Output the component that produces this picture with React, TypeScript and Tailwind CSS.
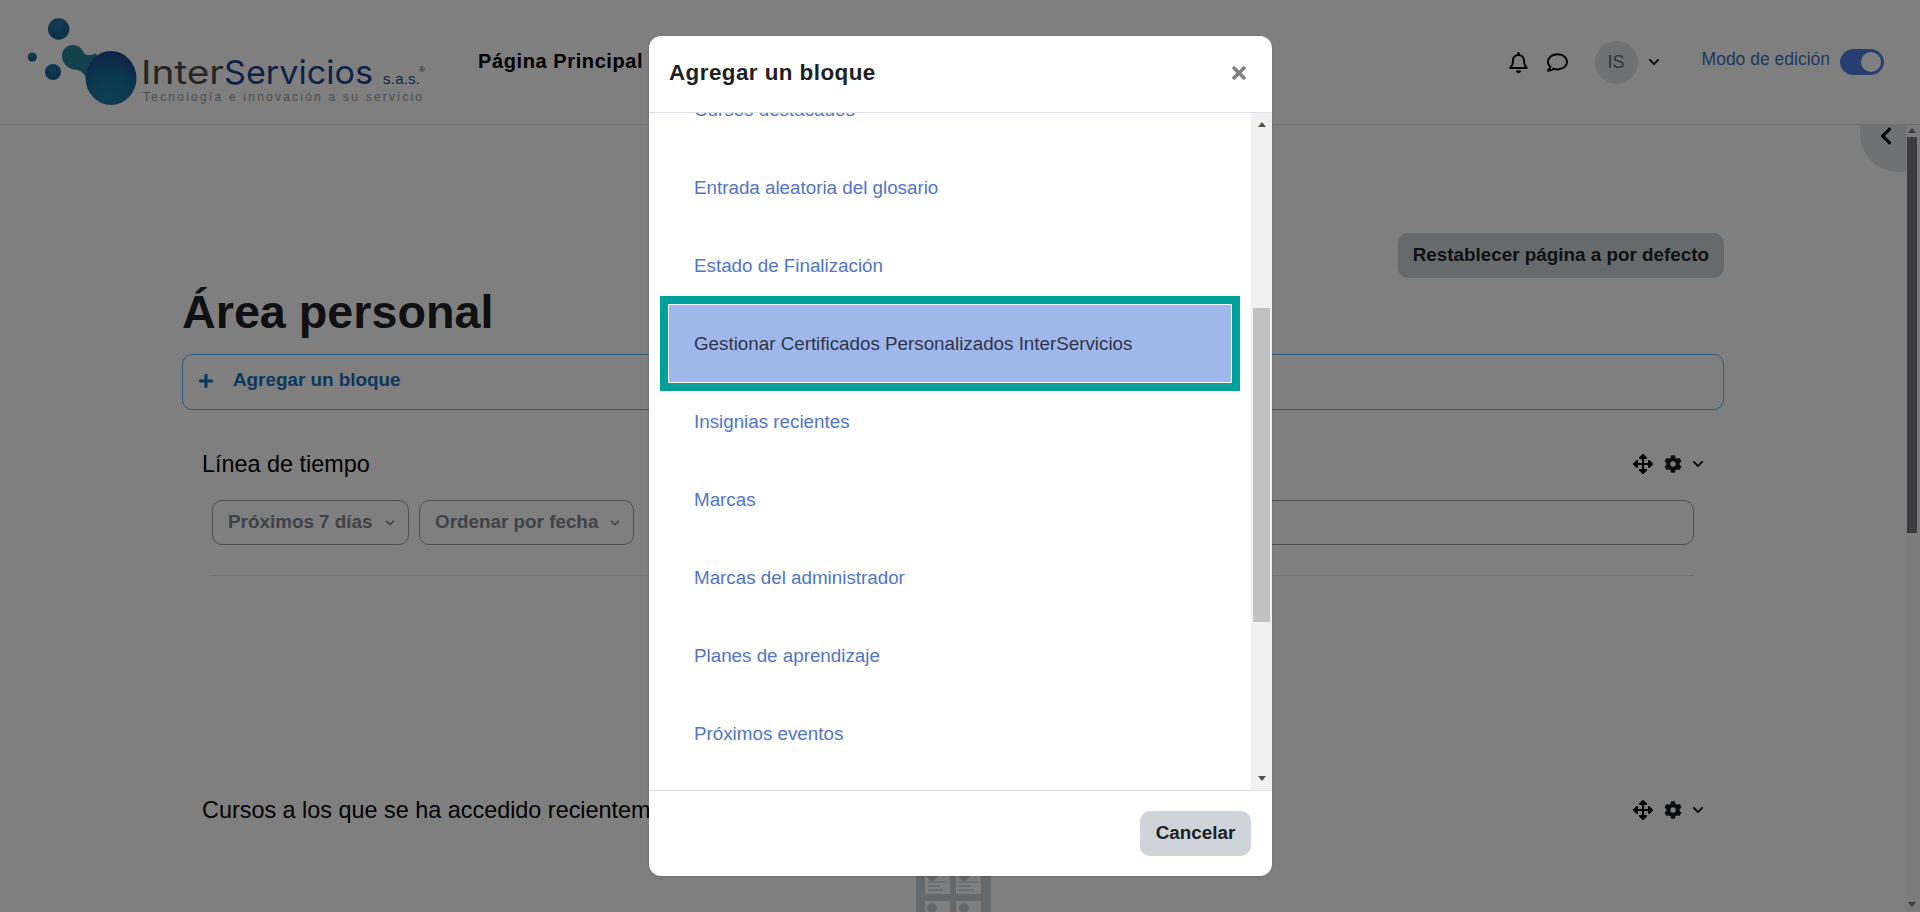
import { FaArrowsAlt, FaChevronDown, FaChevronLeft, FaCog, FaPlus, FaRegBell, FaRegComment, FaTimes } from "react-icons/fa";

const items = [
  "Cursos destacados",
  "Entrada aleatoria del glosario",
  "Estado de Finalización",
  "Gestionar Certificados Personalizados InterServicios",
  "Insignias recientes",
  "Marcas",
  "Marcas del administrador",
  "Planes de aprendizaje",
  "Próximos eventos",
];

function Logo() {
  return (
    <svg width="440" height="124" viewBox="0 0 440 124" className="shrink-0">
      <defs>
        <radialGradient id="big" cx="0.45" cy="0.85" r="0.9">
          <stop offset="0" stopColor="#1a80a8" />
          <stop offset="0.55" stopColor="#166a9c" />
          <stop offset="1" stopColor="#203f88" />
        </radialGradient>
        <radialGradient id="ball" cx="0.5" cy="0.3" r="0.8">
          <stop offset="0" stopColor="#2678a6" />
          <stop offset="1" stopColor="#12588c" />
        </radialGradient>
      </defs>
      <circle cx="58.7" cy="29" r="10.7" fill="url(#ball)" />
      <circle cx="32.3" cy="57" r="4.6" fill="url(#ball)" />
      <circle cx="53" cy="72" r="8" fill="url(#ball)" />
      <path d="M62 56c0-7 5-11 11-11 6 0 9 4 11 8 2 3 7 3 12 0l10 30-16 5c-2-9-6-16-12-18-9 0-16-6-16-14z" fill="#24809a" />
      <ellipse cx="111" cy="78" rx="25.5" ry="27" fill="url(#big)" />
      <text x="141" y="84" fontFamily="Inter, Liberation Sans, sans-serif" fontSize="33" fontWeight="400" textLength="83" lengthAdjust="spacingAndGlyphs" fill="#4a4a4a">Inter</text>
      <text x="224" y="84" fontFamily="Inter, Liberation Sans, sans-serif" fontSize="33" fontWeight="400" textLength="149" lengthAdjust="spacingAndGlyphs" fill="#1c4490">Servicios</text>
      <text x="383" y="84" fontFamily="Liberation Sans, sans-serif" fontSize="15" textLength="37" fill="#1c4490">s.a.s.</text>
      <text x="419" y="72" fontFamily="Liberation Sans, sans-serif" fontSize="8" fill="#1c4490">®</text>
      <text x="143" y="101" fontFamily="Liberation Sans, sans-serif" fontSize="12" textLength="279" fill="#999">Tecnología e innovación a su servicio</text>
    </svg>
  );
}

function BlockIcons() {
  return (
    <div className="flex items-center text-black">
      <FaArrowsAlt className="h-[20px] w-[20px]" />
      <FaCog className="ml-[11px] h-[18px] w-[18px] text-[#16181a]" />
      <FaChevronDown className="ml-[10px] h-[12px] w-[12px] text-[#16181a]" />
    </div>
  );
}

function Dropdown({ label, width }: { label: string; width: string }) {
  return (
    <button className={`flex h-[45px] shrink-0 items-center gap-[12px] rounded-[10px] border border-[#9c9c9c] pl-[15px] text-[18.85px] font-bold text-[#80848e] ${width}`}>
      {label}
      <FaChevronDown className="h-[10px] w-[10px]" />
    </button>
  );
}

function CoursesPicture() {
  return (
    <svg width="75" height="100" viewBox="0 0 75 100" className="mx-auto mt-[14px]">
      <rect width="75" height="100" fill="#cdd2d8" />
      <rect x="9" y="21" width="25" height="32" fill="#ffffff" />
      <rect x="40" y="21" width="25" height="32" fill="#ffffff" />
      <rect x="9" y="60" width="25" height="40" fill="#ffffff" />
      <rect x="40" y="60" width="25" height="40" fill="#ffffff" />
      <circle cx="16" cy="35" r="5" fill="#cdd2d8" />
      <circle cx="48" cy="35" r="5" fill="#cdd2d8" />
      <circle cx="16" cy="67" r="5" fill="#cdd2d8" />
      <circle cx="48" cy="67" r="5" fill="#cdd2d8" />
      <path d="M12 41h18M12 45h12M12 49h15M43 41h18M43 45h12M43 49h15" stroke="#cdd2d8" strokeWidth="1.5" />
    </svg>
  );
}

export default function App() {
  return (
    <div className="relative flex h-[912px] w-[1920px] flex-col overflow-hidden bg-white font-['Liberation_Sans',Arial,sans-serif] text-[18.8px] text-black">
      <header className="flex h-[125px] shrink-0 items-center border-b border-[#dedede] bg-white">
        <Logo />
        <a className="ml-[38px] -mt-[2px] text-[20px] font-bold tracking-[0.6px]">Página Principal</a>
        <div className="ml-auto flex items-center pr-[36px]">
          <FaRegBell className="h-[21px] w-[21px]" />
          <FaRegComment className="ml-[18px] h-[21px] w-[21px]" />
          <div className="ml-[27px] flex h-[43px] w-[43px] items-center justify-center rounded-full bg-[#dfe2e6] text-[18px] text-[#60666c]">IS</div>
          <FaChevronDown className="ml-[10px] h-[12px] w-[12px] text-[#16181a]" />
          <span className="ml-[42px] -mt-[6px] text-[17.5px] text-[#3a70c0]">Modo de edición</span>
          <div className="ml-[10px] flex h-[26px] w-[44px] items-center justify-end rounded-full border border-[#4e7fe0] bg-[#4e7fe0] pr-[2px]">
            <div className="h-[20px] w-[20px] rounded-full bg-white" />
          </div>
        </div>
      </header>

      <div className="flex min-h-0 flex-1">
        <main className="relative min-w-0 flex-1 overflow-hidden">
          <div className="absolute -right-[30px] -top-[29px] h-[76px] w-[76px] rounded-full bg-[#dfe2e6]" />
          <FaChevronLeft className="absolute right-[10px] top-[1px] h-[20px] w-[20px]" />

          <div className="ml-[182px] w-[1542px]">
            <div className="mt-[108px] flex justify-end">
              <button className="h-[45px] rounded-[10px] bg-[#ced4da] px-[15px] text-[18.85px] font-bold text-[#1d2125]">
                Restablecer página a por defecto
              </button>
            </div>
            <h1 className="mt-[5px] text-[46.7px] font-bold leading-[58px] text-[#1d2125]">Área personal</h1>
            <div className="mt-[13px] flex h-[56px] items-center rounded-[10px] border border-[#5cb8ff] pb-[3px] pl-[15px] text-[18.85px] font-bold text-[#1470b8]">
              <FaPlus className="h-[16px] w-[16px]" />
              <span className="ml-[19px]">Agregar un bloque</span>
            </div>

            <section className="px-[20px]">
              <div className="mt-[37px] flex items-center justify-between">
                <h2 className="text-[23.4px] leading-[34px]">Línea de tiempo</h2>
                <BlockIcons />
              </div>
              <div className="ml-[10px] mr-[10px] mt-[19px] flex gap-[10px] border-b border-[#dedede] pb-[30px]">
                <Dropdown label="Próximos 7 días" width="w-[197px]" />
                <Dropdown label="Ordenar por fecha" width="w-[215px]" />
                <div className="ml-auto h-[45px] w-[1045px] rounded-[10px] border border-[#9c9c9c]" />
              </div>
              <div className="mt-[217px] flex items-center justify-between">
                <h2 className="text-[23.4px] leading-[34px]">Cursos a los que se ha accedido recientemente</h2>
                <BlockIcons />
              </div>
              <CoursesPicture />
            </section>
          </div>
        </main>
        <div className="flex w-[14px] shrink-0 flex-col items-center bg-[#f6f6f6] pr-[2px]">
          <div className="mt-[3px] h-0 w-0 border-x-[4px] border-b-[5px] border-x-transparent border-b-[#78787f]" />
          <div className="mt-[4px] h-[396px] w-[10px] bg-[#78787f]" />
          <div className="mb-[5px] mt-auto h-0 w-0 border-x-[4px] border-t-[5px] border-x-transparent border-t-[#78787f]" />
        </div>
      </div>

      <div className="absolute inset-0 flex bg-black/50 pl-[649px] pt-[36px]">
        <div className="flex h-[840px] w-[623px] flex-col overflow-hidden rounded-[12px] bg-white shadow-sm">
          <div className="flex h-[77px] shrink-0 items-center justify-between border-b border-[#dee2e6] pb-[2px] pl-[20px] pr-[23px]">
            <h5 className="text-[22.4px] font-bold tracking-[0.45px] text-[#1d2125]">Agregar un bloque</h5>
            <FaTimes className="h-[20px] w-[20px] text-[#808080]" />
          </div>
          <div className="flex min-h-0 flex-1">
            <div className="min-w-0 flex-1 overflow-hidden">
              <ul className="-mt-[42px] px-[19px]">
                {items.map((item) =>
                  item.startsWith("Gestionar") ? (
                    <li key={item} className="relative z-10 -mt-[1px] flex h-[79px] items-center border border-white bg-[#a0b7eb] pl-[25px] pt-[1px] text-[#2d3548] outline-[8px] outline-[#00a19a]">
                      {item}
                    </li>
                  ) : (
                    <li key={item} className="flex h-[78px] items-center pl-[26px] text-[#5075c9]">
                      {item}
                    </li>
                  ),
                )}
              </ul>
            </div>
            <div className="flex w-[21px] shrink-0 flex-col items-center bg-[#f1f1f1]">
              <div className="mt-[9px] h-0 w-0 border-x-[4px] border-b-[5px] border-x-transparent border-b-[#505050]" />
              <div className="mt-[181px] h-[314px] w-[17px] bg-[#c1c1c1]" />
              <div className="mb-[9px] mt-auto h-0 w-0 border-x-[4px] border-t-[5px] border-x-transparent border-t-[#505050]" />
            </div>
          </div>
          <div className="flex h-[86px] shrink-0 items-center justify-end border-t border-[#dee2e6] pr-[21px]">
            <button className="h-[45px] w-[111px] rounded-[10px] bg-[#ced4da] text-[18.85px] font-bold text-[#1d2125]">Cancelar</button>
          </div>
        </div>
      </div>
    </div>
  );
}
